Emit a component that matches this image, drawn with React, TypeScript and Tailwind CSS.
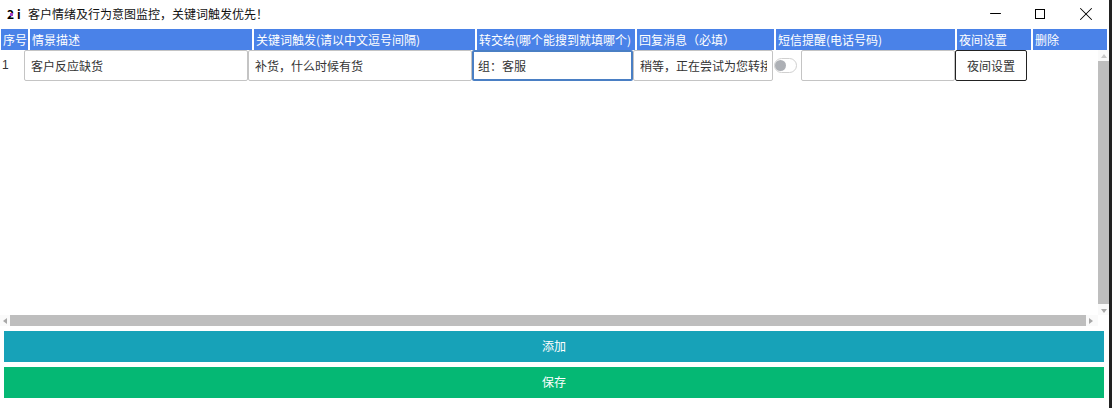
import { Minus, X } from 'lucide-react';

const font = { fontFamily: '"Noto Sans CJK SC", "Liberation Sans", sans-serif' };

const columns = [
  { title: '序号', width: 'w-[27px]' },
  { title: '情景描述', width: 'w-[222px]' },
  { title: '关键词触发(请以中文逗号间隔)', width: 'w-[221px]' },
  { title: '转交给(哪个能搜到就填哪个)', width: 'w-[158px]' },
  { title: '回复消息（必填）', width: 'w-[137px]' },
  { title: '短信提醒(电话号码)', width: 'w-[179px]' },
  { title: '夜间设置', width: 'w-[74px]' },
  { title: '删除', width: 'w-[74px]' },
];

const Cell = (props: { value?: string; width: string; focused?: boolean }) => (
  <div
    className={`${props.width} h-[31px] shrink-0 rounded-[2px] bg-white text-[12px] text-[#333] ${
      props.focused ? 'border-2 border-[#4a7fc4] pl-[4px] leading-[27px]' : 'border border-[#c4c4c4] pl-[6px] leading-[29px]'
    }`}
  >
    <div className="mr-[5px] overflow-hidden whitespace-nowrap">{props.value}</div>
  </div>
);

const App = () => {
  return (
    <div
      className="flex h-[408px] w-[1112px] flex-col overflow-hidden border-r-[3px] border-[#222] bg-white"
      style={font}
    >
      {/* title bar */}
      <div className="flex h-[29px] shrink-0 items-center pb-[2px]">
        <div className="relative ml-[7px] flex w-[15px] items-center text-[12px] font-bold leading-none text-black">
          <span className="w-[10px]">2</span>
          <span>i</span>
          <div className="absolute left-[3px] top-[5px] h-[3px] w-[3px] bg-[#a040c8]" />
        </div>
        <span className="ml-[6px] text-[12px] text-[#111]">客户情绪及行为意图监控，关键词触发优先！</span>
        <div className="ml-auto mr-[12px] flex items-center">
          <Minus size={17} strokeWidth={1.5} className="mr-[31px] text-black" />
          <div className="mr-[30px] h-[10px] w-[10px] border border-black" />
          <X size={22} strokeWidth={1.1} className="text-black" />
        </div>
      </div>

      {/* table header */}
      <div className="ml-[1px] flex h-[21px] shrink-0 gap-[2px]">
        {columns.map(column => (
          <div
            key={column.title}
            className={`${column.width} shrink-0 overflow-hidden whitespace-nowrap bg-[#4a82e8] pl-[2px] text-[12px] leading-[21px] text-white`}
          >
            {column.title}
          </div>
        ))}
      </div>

      {/* table body */}
      <div className="flex h-[265px] shrink-0">
        <div className="flex w-[1098px] shrink-0 items-start">
          <div className="w-[24px] shrink-0 pl-[2px] font-['Liberation_Sans'] text-[12px] leading-[31px] text-[#333]">
            1
          </div>
          <Cell value="客户反应缺货" width="w-[224px]" />
          <Cell value="补货，什么时候有货" width="w-[224px]" />
          <Cell value="组：客服" width="w-[161px]" focused />
          <Cell value="稍等，正在尝试为您转接" width="w-[140px]" />
          <div className="ml-[1px] mr-[4px] mt-[8px] flex h-[15px] w-[23px] shrink-0 items-center rounded-full border border-[#d0d0d0] bg-white">
            <div className="h-[11px] w-[11px] rounded-full bg-[#adb0b5]" />
          </div>
          <Cell width="w-[154px]" />
          <div className="h-[31px] w-[72px] shrink-0 rounded-[2px] border border-[#222] bg-white text-center text-[12px] leading-[29px] text-[#333]">
            夜间设置
          </div>
        </div>
        <div className="flex w-[11px] shrink-0 flex-col items-center bg-[#fafafa]">
          <div className="mt-[4px] h-0 w-0 border-x-[3px] border-b-[4px] border-x-transparent border-b-[#c8c8c8]" />
          <div className="mt-[3px] h-[243px] w-full bg-[#bebebe]" />
          <div className="mt-[5px] h-0 w-0 border-x-[3px] border-t-[4px] border-x-transparent border-t-[#a8a8a8]" />
        </div>
      </div>

      {/* horizontal scrollbar */}
      <div className="flex h-[11px] w-[1098px] shrink-0 items-center bg-[#fafafa]">
        <div className="ml-[3px] h-0 w-0 border-y-[3px] border-r-[4px] border-y-transparent border-r-[#a8a8a8]" />
        <div className="ml-[3px] h-full w-[1076px] bg-[#bebebe]" />
        <div className="ml-[3px] h-0 w-0 border-y-[3px] border-l-[4px] border-y-transparent border-l-[#a8a8a8]" />
      </div>

      {/* actions */}
      <div className="mx-[4px] mt-[5px] flex flex-col gap-[5px]">
        <div className="h-[31px] w-[1100px] bg-[#17a2b8] text-center text-[12px] leading-[29px] text-white">添加</div>
        <div className="h-[31px] w-[1100px] bg-[#05b874] text-center text-[12px] leading-[29px] text-white">保存</div>
      </div>
    </div>
  );
};

export default App;
